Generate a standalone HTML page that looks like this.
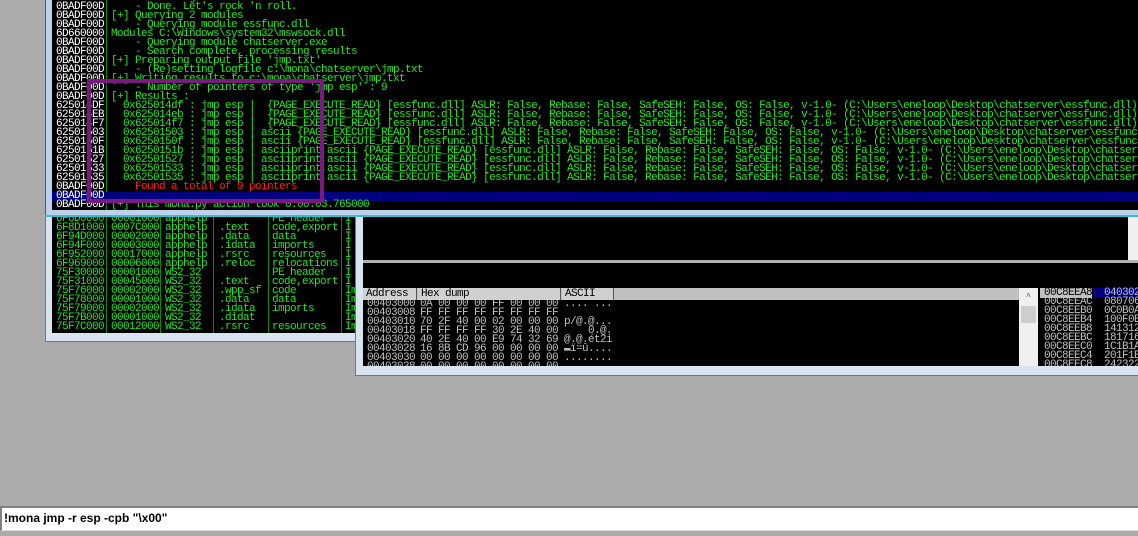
<!DOCTYPE html>
<html><head><meta charset="utf-8"><style>
*{margin:0;padding:0;box-sizing:border-box}
body{width:1138px;height:536px;background:#ababab;position:relative;overflow:hidden;font-family:"Liberation Mono","DejaVu Sans Mono",monospace}
.abs{position:absolute}
.r{position:absolute;height:9px;line-height:9px;font-size:11px;white-space:pre;letter-spacing:-0.6px}
.w{color:#fff}.g{color:#22e822}.rd{color:#ff2020}.gr{color:#c0c0c0}
.vl{position:absolute;width:1px;background:#0a8a0a}
</style></head><body>
<div class="abs" style="left:45px;top:0;width:1093px;height:217px;background:#bcd2ea;border-left:1px solid #555"></div>
<div class="abs" style="left:52px;top:0;width:1086px;height:210px;background:#000;overflow:hidden">
<div class="vl" style="left:54px;top:0;height:210px"></div>
<div class="abs" style="left:0;top:192px;width:1086px;height:9px;background:#000080"></div>
<div id="log"></div>
</div>
<div class="abs" style="left:45px;top:215px;width:1093px;height:2px;background:#30c0d0"></div>
<div class="abs" style="left:45px;top:217px;width:312px;height:125px;background:#d8e4f0;border:1px solid #777;border-top:none"></div>
<div class="abs" style="left:52px;top:217px;width:303px;height:116px;background:#000;overflow:hidden" id="mod">
<div class="vl" style="left:54px;top:0;height:116px"></div>
<div class="vl" style="left:108px;top:0;height:116px"></div>
<div class="vl" style="left:161px;top:0;height:116px"></div>
<div class="vl" style="left:216px;top:0;height:116px"></div>
<div class="vl" style="left:289px;top:0;height:116px"></div>
</div>
<div class="abs" style="left:355px;top:217px;width:783px;height:159px;background:#d8e4f0;border-left:1px solid #777;border-bottom:1px solid #777"></div>
<div class="abs" style="left:363px;top:217px;width:775px;height:43px;background:#000"></div>
<div class="abs" style="left:1128px;top:217px;width:10px;height:43px;background:#f0f0f0"></div>
<div class="abs" style="left:363px;top:260px;width:775px;height:3px;background:#b0b0b0"></div>
<div class="abs" style="left:363px;top:263px;width:775px;height:24px;background:#000"></div>
<div class="abs" style="left:363px;top:287px;width:775px;height:79px;background:#000"></div>
<div class="abs" style="left:363px;top:288px;width:656px;height:12px;background:#c0c0c0"></div>
<div class="abs" style="left:363px;top:288px;width:54px;height:12px;background:#d0d0d0;border-right:1px solid #555;font:11px 'Liberation Mono';letter-spacing:-0.6px;line-height:12px;padding-left:3px;color:#000">Address</div>
<div class="abs" style="left:418px;top:288px;width:143px;height:12px;background:#d0d0d0;border-right:1px solid #555;font:11px 'Liberation Mono';letter-spacing:-0.6px;line-height:12px;padding-left:3px;color:#000">Hex dump</div>
<div class="abs" style="left:562px;top:288px;width:52px;height:12px;background:#d0d0d0;border-right:1px solid #555;font:11px 'Liberation Mono';letter-spacing:-0.6px;line-height:12px;padding-left:3px;color:#000">ASCII</div>
<div class="abs" style="left:1019px;top:288px;width:19px;height:78px;background:#f0f0f0;color:#555;font-size:9px;text-align:center">
<div style="height:18px;line-height:18px">^</div><div style="height:17px;background:#cdcdcd;margin:0 2px"></div></div>
<div id="dump"></div>
<div class="abs" style="left:1040px;top:288px;width:52px;height:10px;background:#c0c0c0"></div>
<div class="abs" style="left:1093px;top:288px;width:45px;height:10px;background:#000080"></div>
<div id="stk"></div>
<div class="abs" style="left:87px;top:79px;width:237px;height:124px;border:4px solid #7a1a80"></div>
<div class="abs" style="left:0;top:506px;width:1138px;height:25px;background:#fff;border:2px solid #808080;border-right:none;border-bottom:1px solid #ddd;font:bold 12px 'Liberation Sans',sans-serif;line-height:21px;padding-left:2px;color:#000">!mona jmp -r esp -cpb "\x00"</div>
<script>
function esc(s){return s.replace(/&/g,'&amp;').replace(/</g,'&lt;')}
var L=[
["0BADF00D","g","    Processing modules"],
["0BADF00D","g","    - Done. Let's rock 'n roll."],
["0BADF00D","g","[+] Querying 2 modules"],
["0BADF00D","g","    - Querying module essfunc.dll"],
["6D660000","g","Modules C:\\Windows\\system32\\mswsock.dll"],
["0BADF00D","g","    - Querying module chatserver.exe"],
["0BADF00D","g","    - Search complete, processing results"],
["0BADF00D","g","[+] Preparing output file 'jmp.txt'"],
["0BADF00D","g","    - (Re)setting logfile c:\\mona\\chatserver\\jmp.txt"],
["0BADF00D","g","[+] Writing results to c:\\mona\\chatserver\\jmp.txt"],
["0BADF00D","g","    - Number of pointers of type 'jmp esp' : 9"],
["0BADF00D","g","[+] Results : "]];
var P=[["625014DF","0x625014df : jmp esp |  {PAGE_EXECUTE_READ} [essfunc.dll] ASLR: False, Rebase: False, SafeSEH: False, OS: False, v-1.0- (C:\\Users\\eneloop\\Desktop\\chatserver\\essfunc.dll)"],
["625014EB","0x625014eb : jmp esp |  {PAGE_EXECUTE_READ} [essfunc.dll] ASLR: False, Rebase: False, SafeSEH: False, OS: False, v-1.0- (C:\\Users\\eneloop\\Desktop\\chatserver\\essfunc.dll)"],
["625014F7","0x625014f7 : jmp esp |  {PAGE_EXECUTE_READ} [essfunc.dll] ASLR: False, Rebase: False, SafeSEH: False, OS: False, v-1.0- (C:\\Users\\eneloop\\Desktop\\chatserver\\essfunc.dll)"],
["62501503","0x62501503 : jmp esp | ascii {PAGE_EXECUTE_READ} [essfunc.dll] ASLR: False, Rebase: False, SafeSEH: False, OS: False, v-1.0- (C:\\Users\\eneloop\\Desktop\\chatserver\\essfunc.dll)"],
["6250150F","0x6250150f : jmp esp | ascii {PAGE_EXECUTE_READ} [essfunc.dll] ASLR: False, Rebase: False, SafeSEH: False, OS: False, v-1.0- (C:\\Users\\eneloop\\Desktop\\chatserver\\essfunc.dll)"],
["6250151B","0x6250151b : jmp esp | asciiprint,ascii {PAGE_EXECUTE_READ} [essfunc.dll] ASLR: False, Rebase: False, SafeSEH: False, OS: False, v-1.0- (C:\\Users\\eneloop\\Desktop\\chatserver\\essfunc.dll)"],
["62501527","0x62501527 : jmp esp | asciiprint,ascii {PAGE_EXECUTE_READ} [essfunc.dll] ASLR: False, Rebase: False, SafeSEH: False, OS: False, v-1.0- (C:\\Users\\eneloop\\Desktop\\chatserver\\essfunc.dll)"],
["62501533","0x62501533 : jmp esp | asciiprint,ascii {PAGE_EXECUTE_READ} [essfunc.dll] ASLR: False, Rebase: False, SafeSEH: False, OS: False, v-1.0- (C:\\Users\\eneloop\\Desktop\\chatserver\\essfunc.dll)"],
["62501535","0x62501535 : jmp esp | asciiprint,ascii {PAGE_EXECUTE_READ} [essfunc.dll] ASLR: False, Rebase: False, SafeSEH: False, OS: False, v-1.0- (C:\\Users\\eneloop\\Desktop\\chatserver\\essfunc.dll)"]];
P.forEach(function(p){L.push([p[0],"g","  "+p[1]])});
L.push(["0BADF00D","rd","    Found a total of 9 pointers"]);
L.push(["0BADF00D","g",""]);
L.push(["0BADF00D","g","[+] This mona.py action took 0:00:03.765000"]);
var h="",t=3;
L.forEach(function(l,i){var y=(i==0)?-6:t+(i-1)*9;
h+='<div class="r w" style="left:4px;top:'+y+'px">'+l[0]+'</div><div class="r '+l[1]+'" style="left:59px;top:'+y+'px">'+esc(l[2])+'</div>';});
document.getElementById('log').innerHTML=h;
var M=[["6F8D0000","00001000","apphelp","","PE header","I"],["6F8D1000","0007C000","apphelp",".text","code,export","I"],["6F94D000","00002000","apphelp",".data","data","I"],["6F94F000","00003000","apphelp",".idata","imports","I"],["6F952000","00017000","apphelp",".rsrc","resources","I"],["6F969000","00006000","apphelp",".reloc","relocations","I"],["75F30000","00001000","WS2_32","","PE header","I"],["75F31000","00045000","WS2_32",".text","code,export","I"],["75F76000","00002000","WS2_32",".wpp_sf","code","Im"],["75F78000","00001000","WS2_32",".data","data","Im"],["75F79000","00002000","WS2_32",".idata","imports","Im"],["75F7B000","00001000","WS2_32",".didat","","Im"],["75F7C000","00012000","WS2_32",".rsrc","resources","Im"]];
var xs=[4,59,113,167,220,293];h="";
M.forEach(function(m,i){var y=-2+i*9;m.forEach(function(c,j){h+='<div class="r g" style="left:'+xs[j]+'px;top:'+y+'px">'+c+'</div>'})});
document.getElementById('mod').insertAdjacentHTML('beforeend',h);
var D=[["00403000","0A 00 00 00 FF 00 00 00",".... ..."],["00403008","FF FF FF FF FF FF FF FF",""],["00403010","70 2F 40 00 02 00 00 00","p/@.@..."],["00403018","FF FF FF FF 30 2E 40 00","    0.@."],["00403020","40 2E 40 00 E9 74 32 69","@.@.\u00e9t2i"],["00403028","16 8B CD 96 00 00 00 00","\u25ac\u00ef=\u00fb...."],["00403030","00 00 00 00 00 00 00 00","........"],["00403038","00 00 00 00 00 00 00 00","........"]];
h="";D.forEach(function(d,i){var y=300+i*9;h+='<div class="r gr" style="left:367px;top:'+y+'px">'+d[0]+'</div><div class="r gr" style="left:420px;top:'+y+'px">'+d[1]+'</div><div class="r gr" style="left:564px;top:'+y+'px">'+esc(d[2])+'</div>'});
document.getElementById('dump').innerHTML='<div class="abs" style="left:363px;top:300px;width:656px;height:66px;overflow:hidden"><div style="position:relative;left:-363px;top:-300px">'+h+'</div></div>';
var S=[["00C8EEA8","040302"],["00C8EEAC","080706"],["00C8EEB0","0C0B0A"],["00C8EEB4","100F0E"],["00C8EEB8","141312"],["00C8EEBC","181716"],["00C8EEC0","1C1B1A"],["00C8EEC4","201F1E"],["00C8EEC8","242322"]];
h="";S.forEach(function(s,i){var y=289+i*9;h+='<div class="r" style="color:'+(i==0?'#000':'#c0c0c0')+';left:1044px;top:'+y+'px">'+s[0]+'</div><div class="r gr" style="left:1104px;top:'+y+'px">'+s[1]+'</div>'});
document.getElementById('stk').innerHTML='<div class="abs" style="left:1038px;top:287px;width:100px;height:79px;overflow:hidden"><div style="position:relative;left:-1038px;top:-287px">'+h+'</div></div>';
</script>
</body></html>
